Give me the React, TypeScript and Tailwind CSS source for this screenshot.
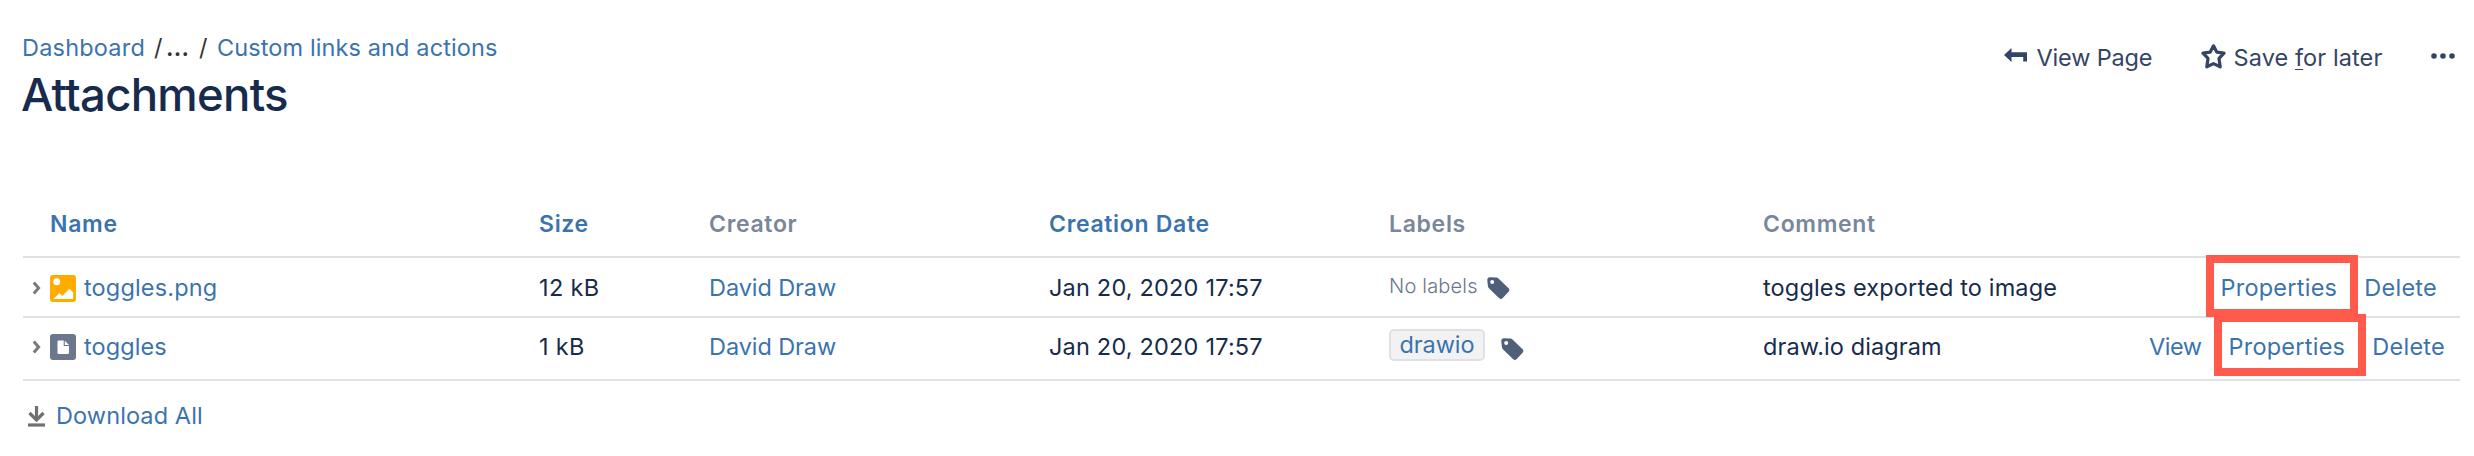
import React from 'react';

const COLS = 'grid w-[2437px] grid-cols-[516px_170px_340px_340px_374px_350px_347px] border-b-2 border-[#dfe1e6]';
const LINK = 'text-[#3b73af]';

function TagIcon({ className }: { className: string }) {
  return (
    <svg className={className} width="23" height="23" viewBox="0 0 23 23" aria-hidden="true">
      <path
        fillRule="evenodd"
        fill="#505f79"
        d="M3 .3 9.4 .5Q10.600 .6 11.500 1.500L21.600 11.300Q23.200 13 21.600 14.700L15.500 21.200Q13.900 22.800 12.200 21.200L1.900 11.200Q1.100 10.400 .9 9.300L.3 3.300Q.2 .3 3 .3ZM5.200 3.100a2 2 0 1 0 0 4a2 2 0 0 0 0-4Z"
      />
    </svg>
  );
}

function Chevron() {
  return (
    <svg className="mr-2 ml-[9px]" width="10" height="14" viewBox="0 0 10 14" fill="none" aria-hidden="true">
      <path d="M1.800 1.500 6.600 7l-4.800 5.500" stroke="#7a7a7a" strokeWidth="3" />
    </svg>
  );
}

function ImageFileIcon() {
  return (
    <svg className="mr-2" width="26" height="27" viewBox="0 0 26 27" aria-hidden="true">
      <rect width="26" height="27" rx="3" fill="#ffab00" />
      <circle cx="6.700" cy="6.800" r="3.500" fill="#fff" />
      <path d="M3.300 23.900 9.500 17.900l2.800 3.200L19.300 13.800 23.200 17.600v6.300Z" fill="#fff" />
    </svg>
  );
}

function GenericFileIcon() {
  return (
    <svg className="mr-2" width="26" height="26" viewBox="0 0 26 26" aria-hidden="true">
      <rect width="26" height="26" rx="3" fill="#6b778c" />
      <path d="M8.700 6.500h5V12h5.300v6.800q0 1.200-1.200 1.200H8.700q-1.200 0-1.200-1.200V7.700q0-1.200 1.200-1.200ZM14.800 6.700 19 11h-4.200Z" fill="#fff" />
    </svg>
  );
}

function Highlighted({ children }: { children: string }) {
  return (
    <a className={`relative tracking-[0.25px] ${LINK}`}>
      {children}
      <span className="absolute -top-[19px] -left-[14px] h-[62px] w-[152px] border-8 border-[#ff5a4c]" />
    </a>
  );
}

export default function App() {
  return (
    <div className="h-[456px] w-[2474px] overflow-hidden bg-white pl-[23px] font-[Inter,sans-serif] text-[23.5px] leading-7 tracking-[0.15px] whitespace-nowrap text-[#172b4d]">
      <header className="flex h-[194px] justify-between">
        <div className="pt-[34px]">
          <nav className="flex text-[#333]">
            <a className={`-ml-px w-[132px] tracking-[0.2px] ${LINK}`}>Dashboard</a>
            <span className="w-[12px]">/</span>
            <span className="w-[33px] font-semibold tracking-[0.3px]">...</span>
            <span className="w-[18px]">/</span>
            <a className={`tracking-[0.11px] ${LINK}`}>Custom links and actions</a>
          </nav>
          <h1 className="mt-[5px] -ml-[2px] text-[45.5px] leading-[56px] font-medium tracking-[-0.72px]">Attachments</h1>
        </div>
        <div className="mt-[42px] mr-[19px] flex h-7 items-center text-[#344563]">
          <svg className="mr-2.5 mb-[3px]" width="23" height="14" viewBox="0 0 23 14" aria-hidden="true">
            <path d="M0 7 7.500 0v4.200H23V13.500h-3.800V9H7.500v5Z" fill="#344563" />
          </svg>
          <a className="mt-1 w-[164px] tracking-[-0.17px]">View Page</a>
          <svg className="mr-2" width="25" height="25" viewBox="0 0 25 25" fill="none" aria-hidden="true">
            <path
              d="M12.500 1.800 15.900 8.200 23 9.200 18 14.400 19.200 22.800 12.500 19.600 5.800 22.800 7 14.400 2 9.200 9.100 8.200Z"
              stroke="#344563"
              strokeWidth="3.200"
              strokeLinejoin="round"
            />
          </svg>
          <a className="mt-1 w-[197.5px] tracking-[0.1px]">
            Save <span className="underline decoration-1 underline-offset-[3px]">f</span>or later
          </a>
          <svg width="24" height="6" viewBox="0 0 24 6" fill="#344563" aria-hidden="true">
            <circle cx="3" cy="3" r="2.800" />
            <circle cx="12" cy="3" r="2.800" />
            <circle cx="21" cy="3" r="2.800" />
          </svg>
        </div>
      </header>

      <div className={`${COLS} h-16 pt-4 text-[23px] font-semibold tracking-[0.68px] text-[#7a869a]`}>
        <span className={`pl-[27px] ${LINK}`}>Name</span>
        <span className={LINK}>Size</span>
        <span>Creator</span>
        <span className={LINK}>Creation Date</span>
        <span>Labels</span>
        <span>Comment</span>
      </div>

      <div className={`${COLS} h-[60px] pt-4`}>
        <div className="flex h-7 items-center">
          <Chevron />
          <ImageFileIcon />
          <a className={`tracking-[0.15px] ${LINK}`}>toggles.png</a>
        </div>
        <span className="tracking-[0.35px]">12 kB</span>
        <a className={`tracking-[-0.08px] ${LINK}`}>David Draw</a>
        <span className="tracking-[0.19px]">Jan 20, 2020 17:57</span>
        <div className="flex h-7">
          <span className="-mt-[2px] w-[98px] text-xl leading-7 font-light tracking-[0.2px] text-[#6b778c]">No labels</span>
          <TagIcon className="mt-[3px]" />
        </div>
        <span>toggles exported to image</span>
        <div className="flex justify-end pr-[23px]">
          <Highlighted>Properties</Highlighted>
          <a className={`ml-[27px] tracking-[0.25px] ${LINK}`}>Delete</a>
        </div>
      </div>

      <div className={`${COLS} h-[63px] pt-[15px]`}>
        <div className="flex h-7 items-center">
          <Chevron />
          <GenericFileIcon />
          <a className={`tracking-[0.1px] ${LINK}`}>toggles</a>
        </div>
        <span className="tracking-[0.3px]">1 kB</span>
        <a className={`tracking-[-0.08px] ${LINK}`}>David Draw</a>
        <span className="tracking-[0.19px]">Jan 20, 2020 17:57</span>
        <div className="flex">
          <span className={`-mt-1 mr-4 flex h-8 w-[96px] justify-center rounded-[5px] border-2 border-[#dfe1e6] bg-[#f2f2f2] leading-7 tracking-[-0.07px] ${LINK}`}>
            drawio
          </span>
          <TagIcon className="mt-[5px]" />
        </div>
        <span className="tracking-[0.08px]">draw.io diagram</span>
        <div className="flex justify-end pr-[15px]">
          <a className={`mr-[27px] tracking-[-0.5px] ${LINK}`}>View</a>
          <Highlighted>Properties</Highlighted>
          <a className={`ml-[27px] tracking-[0.25px] ${LINK}`}>Delete</a>
        </div>
      </div>

      <footer className="mt-[21px] flex h-7 items-center pl-[5px]">
        <svg className="mr-[11px]" width="17" height="21" viewBox="0 0 17 21" fill="none" stroke="#707070" aria-hidden="true">
          <path d="M8.500 0v13M1.500 7l7 7 7-7" strokeWidth="3.200" />
          <path d="M0 19h17" strokeWidth="3.200" />
        </svg>
        <a className={`tracking-[0.1px] ${LINK}`}>Download All</a>
      </footer>
    </div>
  );
}
